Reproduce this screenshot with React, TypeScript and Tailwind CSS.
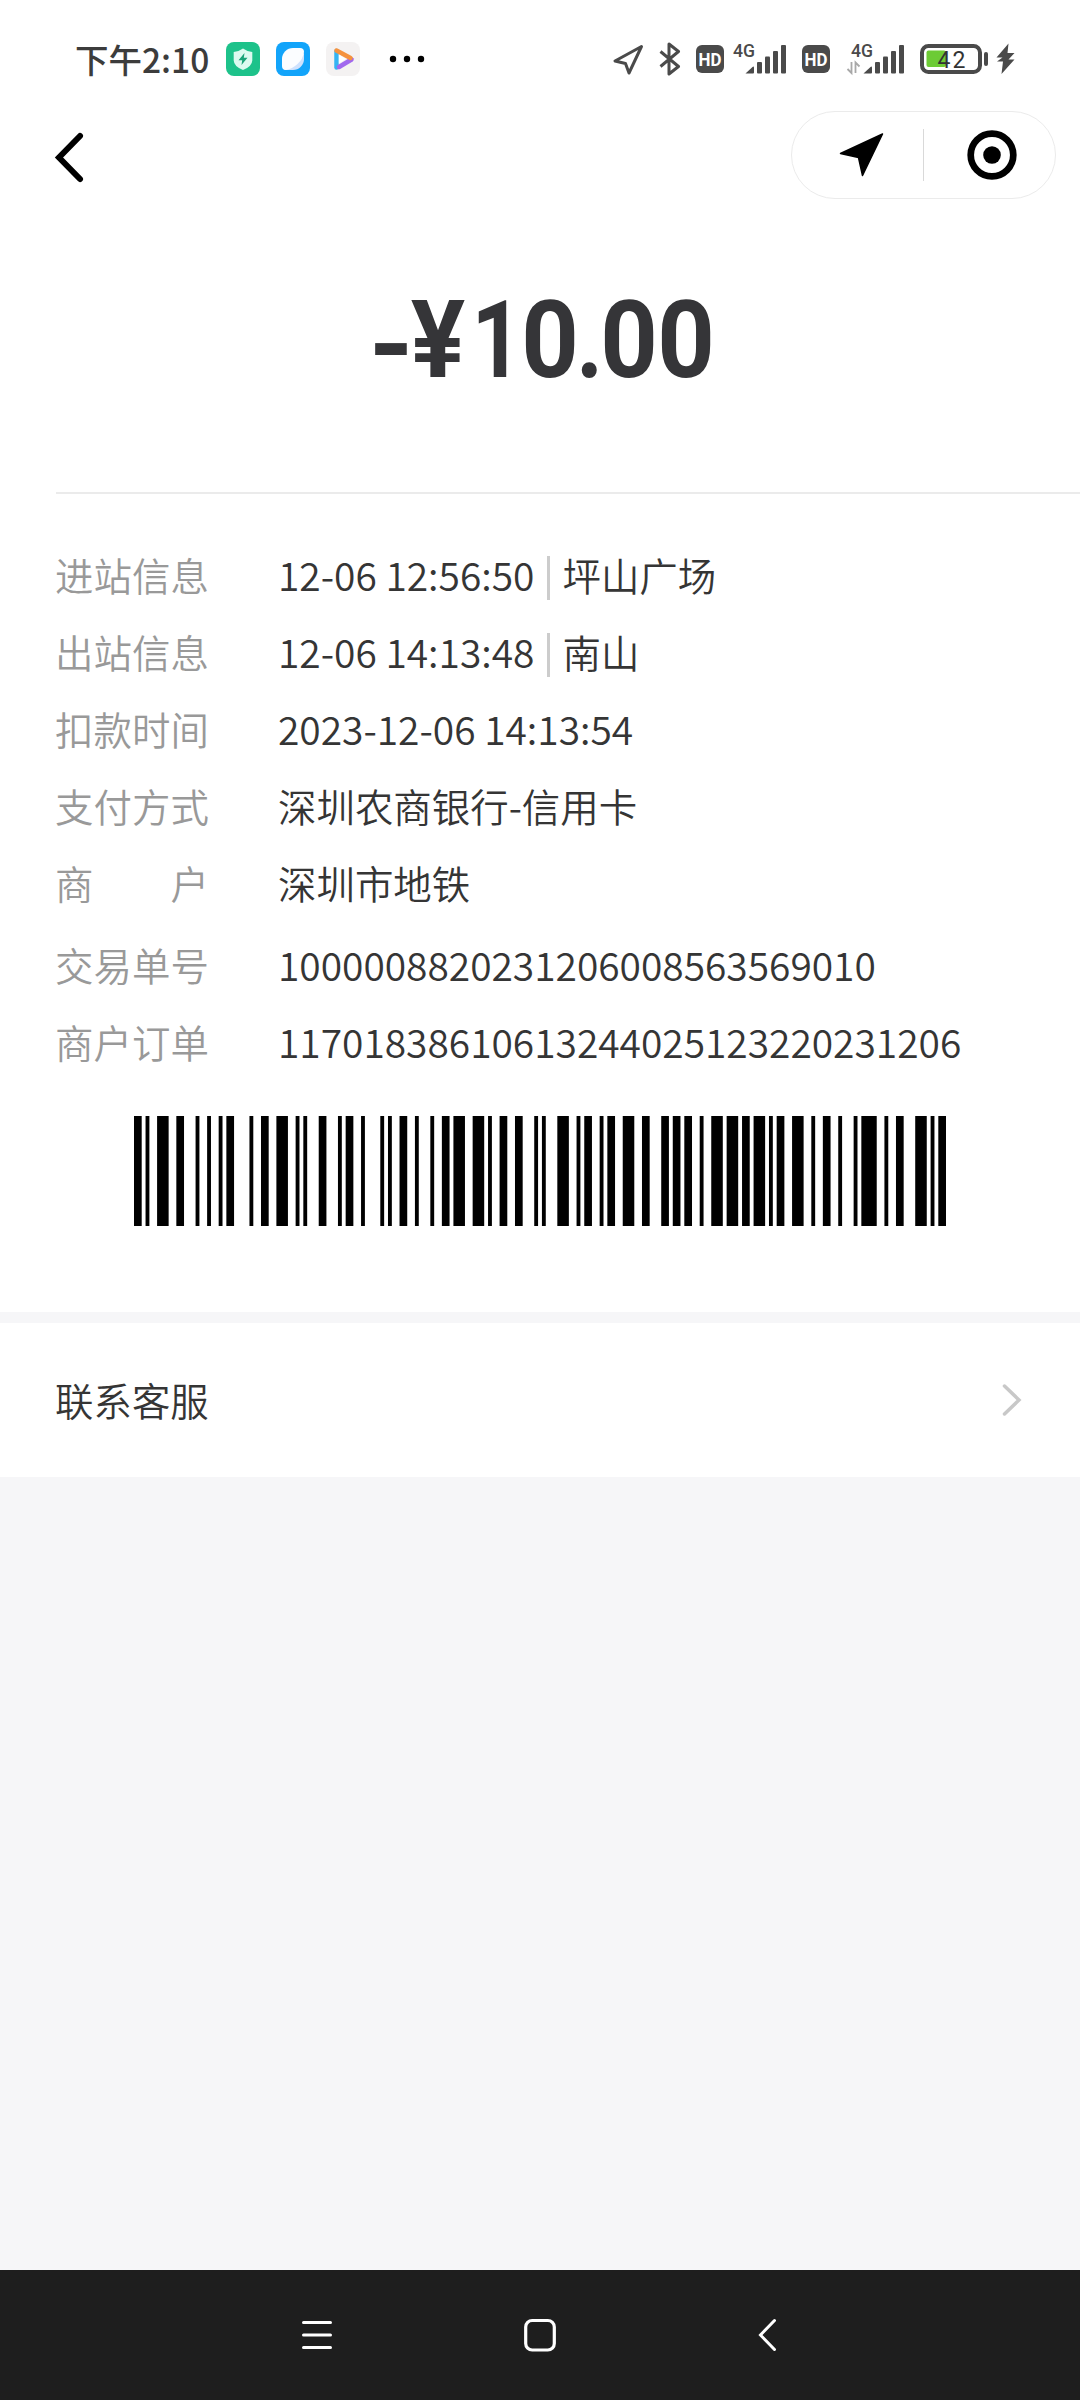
import type { ReactNode } from 'react';

// Code 128 patterns, only the symbols this order number needs
const CODE128: Record<number, string> = {
    6: '122213',
    11: '231212',
    12: '112232',
    13: '122132',
    18: '223211',
    20: '221231',
    23: '312131',
    24: '311222',
    25: '321122',
    32: '232121',
    38: '132311',
    40: '231113',
    61: '221411',
    70: '112412',
    83: '114212',
    105: '211232',
    106: '2331112',
};

const ORDER_NO = '11701838610613244025123220231206';

// the amount uses uneven, DIN-like spacing
const AMOUNT = [
    { char: '-', cell: 'w-[34px] pt-[5px]', glyph: 'scale-x-[1.06]' },
    { char: '¥', cell: 'w-[60px]', glyph: 'scale-x-[0.94]' },
    { char: '1', cell: 'w-[57px]', glyph: 'scale-x-[0.82]' },
    { char: '0', cell: 'w-[50px]', glyph: 'scale-x-[0.93]' },
    { char: '.', cell: 'w-[30px]', glyph: 'scale-x-[0.87]' },
    { char: '0', cell: 'w-[48px]', glyph: 'scale-x-[0.93]' },
    { char: '0', cell: 'w-[65px]', glyph: 'scale-x-[0.93]' },
];

function encode(digits: string) {
    const values = (digits.match(/\d\d/g) ?? []).map(Number);
    const check = values.reduce((sum, v, i) => sum + v * (i + 1), 105) % 103;
    return [105, ...values, check, 106].map((v) => CODE128[v]).join('');
}

function Barcode({ value }: { value: string }) {
    const bars: ReactNode[] = [];
    let x = 0;
    encode(value).split('').forEach((w, i) => {
        if (i % 2 === 0) bars.push(<rect key={i} x={x} y="0" width={Number(w)} height="1" />);
        x += Number(w);
    });
    return (
        <svg className="ml-[134px] h-[110px] w-[812px]" viewBox={`0 0 ${x} 1`} preserveAspectRatio="none" fill="#000">
            {bars}
        </svg>
    );
}

function HdIcon() {
    return (
        <svg width="28" height="28" viewBox="0 0 28 28">
            <rect width="28" height="28" rx="6" fill="#4a4a4a" />
            <text x="14" y="20.5" textAnchor="middle" textLength="23" lengthAdjust="spacingAndGlyphs" fontSize="17.5" fontWeight="700" fill="#fff" fontFamily="Roboto, sans-serif">HD</text>
        </svg>
    );
}

function SignalIcon({ data = false }: { data?: boolean }) {
    return (
        <svg width="58" height="34" viewBox="0 0 58 34" fill="#4a4a4a">
            <text x="5" y="14.5" textLength="22" lengthAdjust="spacingAndGlyphs" fontSize="17.5" fontWeight="500" fontFamily="Roboto, sans-serif">4G</text>
            <path d="M17.500 31.500L24.500 25q1.500-1 1.500.5v5q0 1-1 1z" />
            <rect x="29" y="20" width="5" height="11.5" rx="1" />
            <rect x="37" y="14.5" width="5" height="17" rx="1" />
            <rect x="45" y="9" width="5" height="22.5" rx="1" />
            <rect x="53" y="3" width="5" height="28.5" rx="1" />
            {data && <path d="M5.500 20v11l-4-4M9.500 31V20.500l4 4" fill="none" stroke="#a8a8a8" strokeWidth="1.8" />}
        </svg>
    );
}

function StatusBar() {
    return (
        <div className="flex h-[100px] items-start pt-[42px] pl-[75px]">
            <div className="flex h-[34px] w-[151px] items-center text-[33.5px] leading-none font-medium whitespace-nowrap text-[#3c3c3c]">下午2:10</div>
            <div className="flex gap-4">
                <svg width="34" height="34" viewBox="0 0 34 34">
                    <rect width="34" height="34" rx="8" fill="#1dc28a" />
                    <path d="M17 6.500Q21 9.500 26.300 10v8.500Q26 24.500 17 28 8 24.500 7.700 18.500V10Q13 9.500 17 6.500z" fill="#dcfaef" />
                    <path d="M18.500 11l-6 7.200h3.700L15.500 23l6-7.300h-3.700z" fill="#1aa377" />
                </svg>
                <svg width="34" height="34" viewBox="0 0 34 34">
                    <rect width="34" height="34" rx="8" fill="#12a4fa" />
                    <path d="M28 11v6A11 11 0 0 1 17 28h-7q-3 0-3-3z" fill="#cfe2fd" />
                    <path d="M6 17A11 11 0 0 1 17 6h7q4 0 4 4-1 7-6.500 12T10 28q-4 0-4-4z" fill="#fbfdff" />
                </svg>
                <svg width="34" height="34" viewBox="0 0 34 34">
                    <rect width="34" height="34" rx="8" fill="#f4f2f2" />
                    <path d="M10.500 9v16.500" stroke="#35b4f2" strokeWidth="4.500" strokeLinecap="round" />
                    <path d="M13 25L25.500 17.500" stroke="#a168ee" strokeWidth="4.500" strokeLinecap="round" />
                    <path d="M10.500 8.500L24.500 16" stroke="#f5923e" strokeWidth="4.500" strokeLinecap="round" />
                    <path d="M12.800 12.500v9l7-4.500z" fill="#fff" />
                </svg>
            </div>
            <svg className="ml-[29px]" width="36" height="34" viewBox="0 0 36 34">
                <circle cx="4" cy="17" r="3.200" />
                <circle cx="18" cy="17" r="3.200" />
                <circle cx="32" cy="17" r="3.200" />
            </svg>
            <svg className="ml-[187px]" width="32" height="34" viewBox="0 0 32 34" fill="none" stroke="#4a4a4a" strokeWidth="3" strokeLinejoin="round">
                <path d="M29.500 4.500L3 19l10.500 2.500L17 31z" />
            </svg>
            <svg className="ml-[15px]" width="22" height="34" viewBox="0 0 22 34" fill="none" stroke="#4a4a4a" strokeWidth="3" strokeLinejoin="round">
                <path d="M1.500 9.500l18 15L10 32V2l9.500 7.500-18 15" />
            </svg>
            <div className="mt-[3px] ml-[15px]"><HdIcon /></div>
            <div className="ml-1"><SignalIcon /></div>
            <div className="mt-[3px] ml-4"><HdIcon /></div>
            <div className="ml-4"><SignalIcon data /></div>
            <svg className="ml-4" width="69" height="34" viewBox="0 0 69 34">
                <rect x="2" y="4" width="58" height="26" rx="6.500" fill="#fff" stroke="#4a4a4a" strokeWidth="4" />
                <rect x="6.500" y="8.500" width="19.500" height="16.500" rx="2" fill="#6dcb35" />
                <rect x="64" y="10" width="4" height="14" rx="2" fill="#4a4a4a" />
                <text x="31.500" y="25.500" textAnchor="middle" textLength="28" fontSize="23" fill="#333" fontFamily="Roboto, sans-serif">42</text>
            </svg>
            <svg className="ml-[7px]" width="19" height="34" viewBox="0 0 19 34" fill="#4a4a4a">
                <path d="M12.500 1.500L.5 15.500h6l-5.500 4h6L5.500 32 18.500 17.500h-6l6-6.500h-7z" />
            </svg>
        </div>
    );
}

function TitleBar() {
    return (
        <div className="flex h-[110px] items-start justify-between pt-[11px] pr-6 pl-[53px]">
            <svg className="mt-5" width="34" height="54" viewBox="0 0 34 54" fill="none" stroke="#000" strokeWidth="6" strokeLinecap="round">
                <path d="M27 5L6 26.500l21 21.500" />
            </svg>
            <div className="flex h-[88px] w-[265px] items-center rounded-full border border-[#ebebeb]">
                <svg className="ml-[47px]" width="46" height="46" viewBox="0 0 46 46" fill="#000" stroke="#000" strokeWidth="1.500" strokeLinejoin="round">
                    <path d="M43.500 2L1.500 21.500 19.500 25.500 23.500 43.500z" />
                </svg>
                <div className="ml-[38px] h-[52px] w-px bg-[#d9d9d9]" />
                <svg className="ml-[43px]" width="50" height="50" viewBox="0 0 50 50">
                    <circle cx="25" cy="25" r="21.300" fill="none" stroke="#000" strokeWidth="6.700" />
                    <circle cx="25" cy="25" r="8.800" />
                </svg>
            </div>
        </div>
    );
}

function Row({ label, children }: { label: string; children: ReactNode }) {
    return (
        <div className="flex h-[77px] items-center whitespace-nowrap">
            <div className="flex w-[223px] text-[#999]">
                <span className="flex w-[154px] justify-between">
                    {label.split('').map((c, i) => <span key={i}>{c}</span>)}
                </span>
            </div>
            <div className="flex items-center">{children}</div>
        </div>
    );
}

// digits run slightly larger than the Chinese text
function Digits({ children }: { children: string }) {
    return <span className="text-[38.9px]">{children}</span>;
}

function Station({ time, name }: { time: string; name: string }) {
    return (
        <>
            <Digits>{time}</Digits>
            <span className="mt-1.5 mr-3 ml-[13px] h-11 w-[3px] bg-[#ccc]" />
            <span>{name}</span>
        </>
    );
}

export default function App() {
    return (
        <div className="flex h-[2400px] w-[1080px] flex-col overflow-hidden bg-[#f6f6f8] font-['Noto_Sans_CJK_SC',sans-serif] text-[38.45px] leading-none text-[#353535]">
            <div className="h-[1312px] bg-white">
                <StatusBar />
                <TitleBar />

                <div className="flex h-[282px] items-start pt-[76px] pl-[374px] text-[108px] leading-[108px] font-bold text-[#353538] font-['Roboto',sans-serif]">
                    {AMOUNT.map((a, i) => (
                        <span key={i} className={`flex justify-center ${a.cell}`}>
                            <span className={a.glyph}>{a.char}</span>
                        </span>
                    ))}
                </div>
                <div className="ml-14 h-0.5 bg-[#ebebeb]" />

                <div className="pt-[42px] pl-[55px] font-[350]">
                    <Row label="进站信息"><Station time="12-06 12:56:50" name="坪山广场" /></Row>
                    <Row label="出站信息"><Station time="12-06 14:13:48" name="南山" /></Row>
                    <Row label="扣款时间"><Digits>2023-12-06 14:13:54</Digits></Row>
                    <Row label="支付方式">深圳农商银行-信用卡</Row>
                    <Row label="商户">深圳市地铁</Row>
                    <div className="h-[5px]" />
                    <Row label="交易单号"><Digits>1000008820231206008563569010</Digits></Row>
                    <Row label="商户订单"><Digits>{ORDER_NO}</Digits></Row>
                </div>

                <div className="pt-9">
                    <Barcode value={ORDER_NO} />
                </div>
            </div>

            <div className="mt-[11px] flex h-[154px] items-center justify-between bg-white pr-[57px] pl-[55px]">
                <span className="pb-px font-[350]">联系客服</span>
                <svg width="22" height="34" viewBox="0 0 22 34" fill="none" stroke="#c8c8c8" strokeWidth="3.500" strokeLinecap="round">
                    <path d="M3.500 3L18 17 3.500 31" />
                </svg>
            </div>

            <div className="mt-auto flex h-[130px] items-center bg-[#1e1e1e]">
                <svg className="ml-[300px]" width="34" height="34" viewBox="0 0 34 34" stroke="#fff" strokeWidth="3" strokeLinecap="round">
                    <path d="M3.500 4.500h27M3.500 17h27M3.500 29.500h27" />
                </svg>
                <svg className="ml-[189px]" width="34" height="34" viewBox="0 0 34 34" fill="none" stroke="#fff" strokeWidth="3.200">
                    <rect x="2.700" y="2.500" width="28.600" height="29.500" rx="6.500" />
                </svg>
                <svg className="ml-[200px]" width="20" height="34" viewBox="0 0 20 34" fill="none" stroke="#fff" strokeWidth="3" strokeLinecap="round">
                    <path d="M17.500 2.500L3.500 17l14 14.500" />
                </svg>
            </div>
        </div>
    );
}
